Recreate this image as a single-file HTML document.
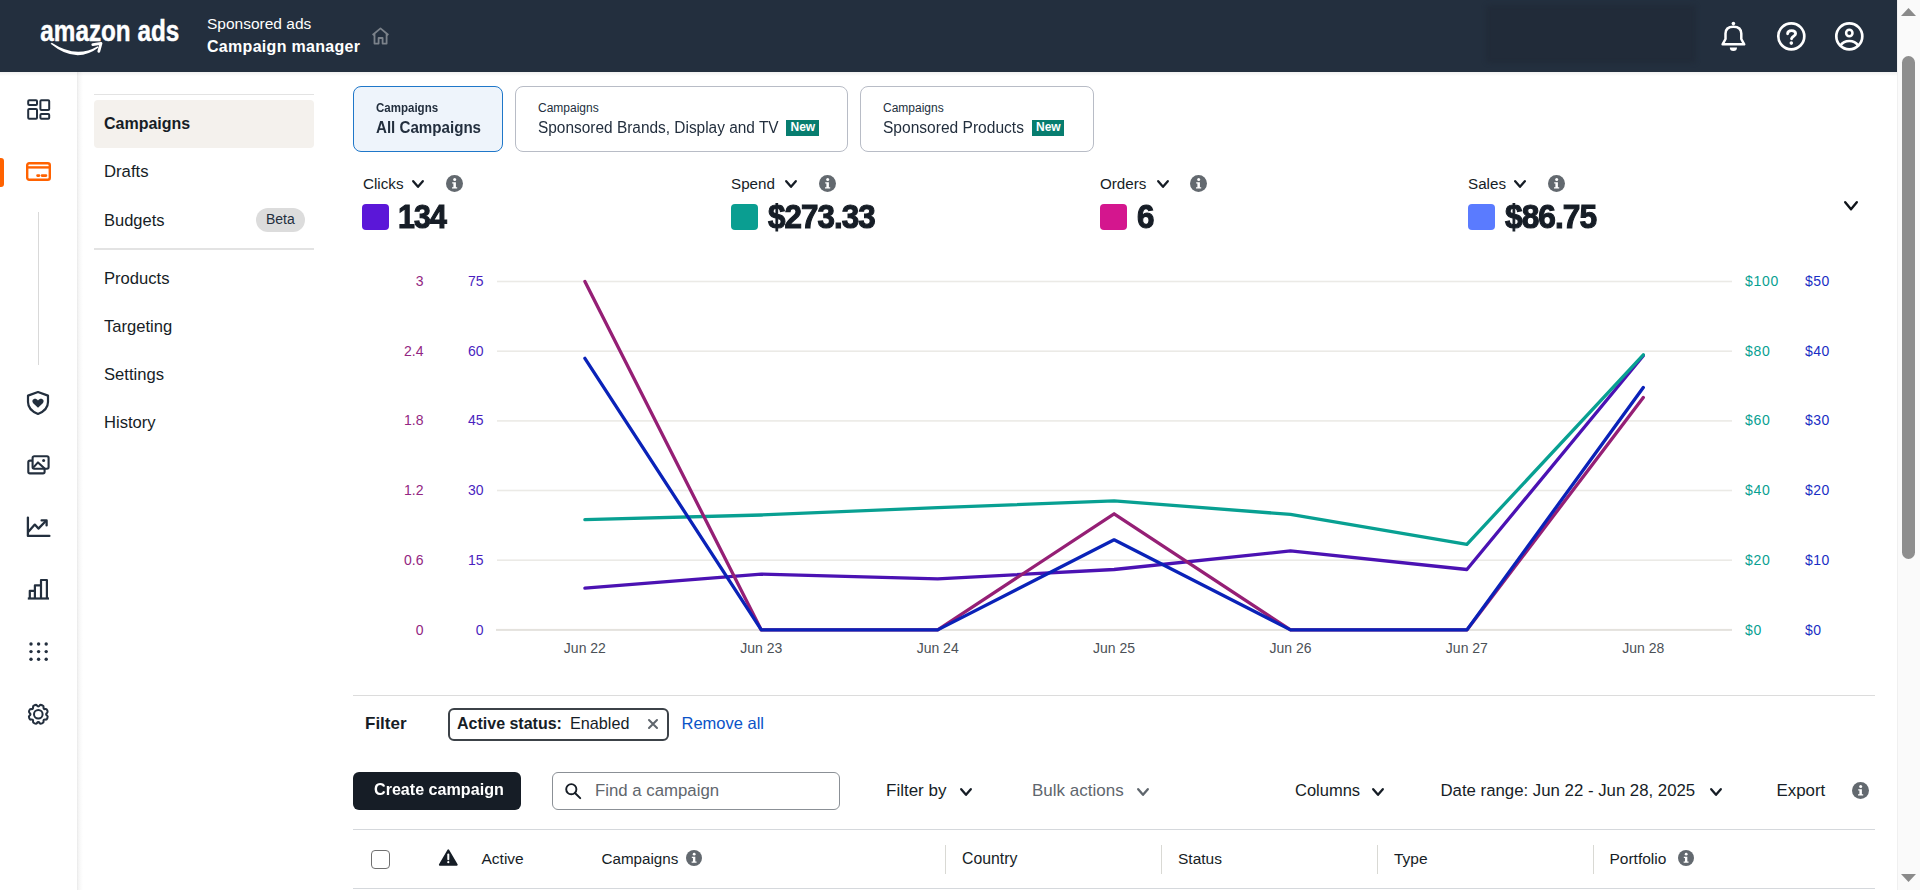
<!DOCTYPE html>
<html><head><meta charset="utf-8">
<style>
*{box-sizing:border-box;margin:0;padding:0}
html,body{width:1920px;height:890px;overflow:hidden;background:#fff;font-family:"Liberation Sans",sans-serif;color:#161d26}
.a{position:absolute;white-space:nowrap;line-height:1}
svg{position:absolute;overflow:visible}
#hdr{position:absolute;left:0;top:0;width:1897px;height:72px;background:#232f3e}
#rail{position:absolute;left:0;top:72px;width:77px;height:818px;background:#fff}
#railsh{position:absolute;left:77px;top:72px;width:6px;height:818px;background:linear-gradient(90deg,#e9e9e9,#f6f6f6 30%,rgba(255,255,255,0))}
#sb{position:absolute;left:1897px;top:0;width:23px;height:890px;background:#fafafa;border-left:1px solid #f0f0f0}
</style></head><body>

<!-- HEADER -->
<div id="hdr"></div>
<div style="position:absolute;left:1486px;top:5px;width:210px;height:58px;background:#212b39;border-radius:4px;filter:blur(2px)"></div>


<!-- logo -->
<svg style="left:0;top:0" width="200" height="72">
  <text x="40.3" y="40.5" font-family="Liberation Sans" font-weight="700" font-size="29" fill="#fff" stroke="#fff" stroke-width="0.45" textLength="139" lengthAdjust="spacingAndGlyphs">amazon ads</text>
  <path d="M50.6 43.8 Q76 64.6 98.6 47.6 L97.8 46.2 Q76 58.8 51.8 42.8 Z" fill="#fff"/>
  <path d="M92.8 44.6 L101 43.4 L98.8 51.4" stroke="#fff" stroke-width="2.8" fill="none" stroke-linecap="round" stroke-linejoin="round"/>
</svg>
<div class="a" style="left:207px;top:15.8px;font-size:15.5px;color:#fff">Sponsored ads</div>
<div class="a" style="left:207px;top:39px;font-size:16px;font-weight:700;color:#fff;letter-spacing:.3px">Campaign manager</div>
<!-- home icon -->
<svg style="left:370px;top:24.5px" width="22" height="22" viewBox="0 0 22 22">
  <path d="M2.6 10 L10.5 3.4 L18.4 10 M4.5 8.6 V18.6 H8.6 V13 H12.6 V18.6 H16.6 V8.6" stroke="#7b828a" stroke-width="1.8" fill="none" stroke-linejoin="round"/>
</svg>

<!-- header right icons -->
<svg style="left:1718px;top:20px" width="30" height="34" viewBox="0 0 30 34">
  <path d="M4.6 24.3 L7.5 19 V13.6 C7.5 8.6 11 6.7 15.4 6.7 C19.8 6.7 23.3 8.6 23.3 13.6 V19 L26.2 24.3 Z" stroke="#fff" stroke-width="2.5" fill="none" stroke-linejoin="round"/>
  <circle cx="15.4" cy="3.6" r="1.8" fill="#fff"/>
  <path d="M11.8 27.4 H19 A3.6 3.5 0 0 1 11.8 27.4 Z" fill="#fff"/>
</svg>
<svg style="left:1776px;top:21px" width="31" height="31" viewBox="0 0 31 31">
  <circle cx="15.3" cy="15.3" r="13" stroke="#fff" stroke-width="2.7" fill="none"/>
  <path d="M11.6 12.8 C11.6 10.6 13.4 9.6 15.6 9.6 C18.2 9.6 19.6 10.9 19.6 12.7 C19.6 14.9 16.4 15.3 15.5 17.8" stroke="#fff" stroke-width="2.8" fill="none" stroke-linecap="round"/>
  <circle cx="15.3" cy="22.1" r="1.8" fill="#fff"/>
</svg>
<svg style="left:1834px;top:21px" width="31" height="31" viewBox="0 0 31 31">
  <circle cx="15.3" cy="15.3" r="13" stroke="#fff" stroke-width="2.7" fill="none"/>
  <circle cx="15.3" cy="12" r="3.2" stroke="#fff" stroke-width="2.5" fill="none"/>
  <path d="M6.5 24.5 C8.5 21.5 11.8 20 15.3 20 C18.8 20 22.1 21.5 24.1 24.5" stroke="#fff" stroke-width="2.7" fill="none"/>
</svg>

<!-- LEFT RAIL -->
<div id="rail"></div><div id="railsh"></div>
<div style="position:absolute;left:0;top:158px;width:4px;height:29px;background:#ff6200;border-radius:0 3px 3px 0"></div>


<!-- rail icons -->
<svg style="left:26px;top:98px" width="26" height="24" viewBox="0 0 26 24">
  <g stroke="#232f3e" stroke-width="2" fill="none" stroke-linejoin="round">
  <rect x="2.2" y="2.2" width="8.8" height="4.8" rx="1"/>
  <rect x="2.2" y="11" width="8.8" height="9.8" rx="1"/>
  <rect x="14.4" y="2.2" width="8.8" height="9.8" rx="1"/>
  <rect x="14.4" y="16" width="8.8" height="4.8" rx="1"/>
  </g>
</svg>
<svg style="left:25px;top:161px" width="28" height="22" viewBox="0 0 28 22">
  <g stroke="#ff6200" stroke-width="2.4" fill="none">
  <rect x="2.2" y="2.2" width="22.6" height="16.6" rx="2"/>
  <path d="M2.2 6.4 H24.8"/>
  <path d="M12.5 14.6 H14 M17 14.6 H21" stroke-linecap="round" stroke-width="2.6"/>
  </g>
</svg>
<div style="position:absolute;left:37.5px;top:212px;width:1.5px;height:153px;background:#d9d9d9"></div>
<svg style="left:24.4px;top:389px" width="28" height="28" viewBox="0 0 28 28">
  <path d="M14 3 L24 6.6 V13 C24 19 19.5 22.8 14 25 C8.5 22.8 4 19 4 13 V6.6 Z" stroke="#232f3e" stroke-width="2.2" fill="none" stroke-linejoin="round"/>
  <path d="M14 18.8 L9.2 14.2 C7.9 12.9 8.1 10.7 9.9 10 C11.4 9.5 13 10.2 14 11.5 C15 10.2 16.6 9.5 18.1 10 C19.9 10.7 20.1 12.9 18.8 14.2 Z" fill="#232f3e"/>
</svg>
<svg style="left:25px;top:452px" width="28" height="26" viewBox="0 0 28 26">
  <g stroke="#232f3e" stroke-width="2.1" fill="none" stroke-linejoin="round">
  <rect x="7.6" y="4.3" width="16" height="12.4" rx="1.6"/>
  <path d="M7.6 8.6 H4.9 Q3.3 8.6 3.3 10.2 V19.8 Q3.3 21.4 4.9 21.4 H18 Q19.6 21.4 19.6 19.8 V16.7"/>
  <path d="M8.2 15.6 L13 10.4 L19.6 16.6"/>
  </g>
  <circle cx="18.6" cy="8.4" r="1.5" fill="#232f3e"/>
</svg>
<svg style="left:25px;top:515px" width="28" height="24" viewBox="0 0 28 24">
  <g stroke="#232f3e" stroke-width="2.3" fill="none" stroke-linejoin="round" stroke-linecap="round">
  <path d="M2.9 2.6 V20.9 H24.4"/>
  <path d="M3.6 16.4 L9.8 9.6 L13.4 13.6 L20.6 6.2"/>
  <path d="M16.6 5.4 H21.6 V10.4"/>
  </g>
</svg>
<svg style="left:25px;top:577px" width="28" height="25" viewBox="0 0 28 25">
  <g stroke="#232f3e" stroke-width="2.2" fill="none" stroke-linejoin="round">
  <path d="M2.8 21.5 H24"/>
  <path d="M4.8 21.5 V13.8 H9.9 V8.3 H16 V3 H21.9 V21.5 M9.9 13.8 V21.5 M16 8.3 V21.5"/>
  </g>
</svg>
<svg style="left:25px;top:640px" width="28" height="24" viewBox="0 0 28 24">
  <g fill="#232f3e">
  <circle cx="6" cy="4" r="1.7"/><circle cx="13.6" cy="4" r="1.7"/><circle cx="21.2" cy="4" r="1.7"/>
  <circle cx="6" cy="11.6" r="1.7"/><circle cx="13.6" cy="11.6" r="1.7"/><circle cx="21.2" cy="11.6" r="1.7"/>
  <circle cx="6" cy="19.2" r="1.7"/><circle cx="13.6" cy="19.2" r="1.7"/><circle cx="21.2" cy="19.2" r="1.7"/>
  </g>
</svg>
<svg style="left:25px;top:701px" width="28" height="28" viewBox="0 0 28 28">
  <path id="gear" stroke="#232f3e" stroke-width="2.1" fill="none" stroke-linejoin="round" d="M21.16 13.30 Q21.16 12.54 22.13 11.92 Q23.10 11.31 22.37 9.54 Q21.64 7.78 20.52 8.03 Q19.40 8.27 18.86 7.74 Q18.33 7.20 18.57 6.08 Q18.82 4.96 17.06 4.23 Q15.29 3.50 14.68 4.47 Q14.06 5.44 13.30 5.44 Q12.54 5.44 11.92 4.47 Q11.31 3.50 9.54 4.23 Q7.78 4.96 8.03 6.08 Q8.27 7.20 7.74 7.74 Q7.20 8.27 6.08 8.03 Q4.96 7.78 4.23 9.54 Q3.50 11.31 4.47 11.92 Q5.44 12.54 5.44 13.30 Q5.44 14.06 4.47 14.68 Q3.50 15.29 4.23 17.06 Q4.96 18.82 6.08 18.57 Q7.20 18.33 7.74 18.86 Q8.27 19.40 8.03 20.52 Q7.78 21.64 9.54 22.37 Q11.31 23.10 11.92 22.13 Q12.54 21.16 13.30 21.16 Q14.06 21.16 14.68 22.13 Q15.29 23.10 17.06 22.37 Q18.82 21.64 18.57 20.52 Q18.33 19.40 18.86 18.86 Q19.40 18.33 20.52 18.57 Q21.64 18.82 22.37 17.06 Q23.10 15.29 22.13 14.68 Q21.16 14.06 21.16 13.30 Z"/>
  <circle cx="13.3" cy="13.3" r="4.3" stroke="#232f3e" stroke-width="2" fill="none"/>
</svg>

<div style="position:absolute;left:0;top:72px;z-index:5;width:1897px;height:4px;background:linear-gradient(rgba(0,0,0,.06),rgba(0,0,0,0))"></div>
<!-- SECONDARY NAV -->
<div style="position:absolute;left:94px;top:94px;width:220px;height:1px;background:#e3e3e3"></div>
<div style="position:absolute;left:94px;top:100px;width:220px;height:48px;background:#f4f1ed;border-radius:4px"></div>
<div class="a" style="left:104px;top:115.5px;font-size:16px;font-weight:700">Campaigns</div>
<div class="a" style="left:104px;top:163.7px;font-size:16.7px">Drafts</div>
<div class="a" style="left:104px;top:211.5px;font-size:16.5px">Budgets</div>
<div style="position:absolute;left:256px;top:208px;width:49px;height:24px;background:#dcdcdc;border-radius:12px"></div>
<div class="a" style="left:266px;top:212px;font-size:14px;color:#232f3e">Beta</div>
<div style="position:absolute;left:94px;top:248px;width:220px;height:2px;background:#e3e3e3"></div>
<div class="a" style="left:104px;top:270.7px;font-size:16.6px">Products</div>
<div class="a" style="left:104px;top:318.8px;font-size:16.6px">Targeting</div>
<div class="a" style="left:104px;top:366.8px;font-size:16.6px">Settings</div>
<div class="a" style="left:104px;top:414.9px;font-size:16.6px">History</div>


<!-- TABS -->
<div style="position:absolute;left:353px;top:86px;width:150px;height:66px;background:#eef4fb;border:1.5px solid #1f77c9;border-radius:8px"></div>
<div class="a" style="left:376px;top:101.8px;font-size:12px;font-weight:700;color:#232f3e;transform:scaleX(.96);transform-origin:0 0">Campaigns</div>
<div class="a" style="left:376px;top:119.7px;font-size:16px;font-weight:700;color:#232f3e;transform:scaleX(.945);transform-origin:0 0">All Campaigns</div>

<div style="position:absolute;left:515px;top:86px;width:333px;height:66px;background:#fff;border:1px solid #b8bcc6;border-radius:8px"></div>
<div class="a" style="left:538px;top:102.2px;font-size:12px;color:#232f3e">Campaigns</div>
<div class="a" style="left:538px;top:119.9px;font-size:16px;color:#232f3e;transform:scaleX(.964);transform-origin:0 0">Sponsored Brands, Display and TV</div>
<div style="position:absolute;left:786px;top:120px;width:33px;height:16px;background:#077d6f"></div>
<div class="a" style="left:790.5px;top:121px;font-size:12px;font-weight:700;color:#fff">New</div>

<div style="position:absolute;left:860px;top:86px;width:234px;height:66px;background:#fff;border:1px solid #b8bcc6;border-radius:8px"></div>
<div class="a" style="left:883px;top:102.2px;font-size:12px;color:#232f3e">Campaigns</div>
<div class="a" style="left:883px;top:119.9px;font-size:16px;color:#232f3e;transform:scaleX(.972);transform-origin:0 0">Sponsored Products</div>
<div style="position:absolute;left:1032px;top:120px;width:32px;height:16px;background:#077d6f"></div>
<div class="a" style="left:1036px;top:121px;font-size:12px;font-weight:700;color:#fff">New</div>

<!-- METRICS -->
<div class="a" style="left:363px;top:175.6px;font-size:15.2px;color:#161d26">Clicks</div>
<svg style="left:412px;top:180px" width="12" height="8" viewBox="0 0 12 8"><path d="M1.2 1.2 L6.0 6.8 L10.8 1.2" stroke="#161d26" stroke-width="2.3" fill="none" stroke-linecap="round" stroke-linejoin="round"/></svg>
<svg style="left:445.5px;top:175.0px" width="17.0" height="17.0" viewBox="0 0 17 17"><circle cx="8.5" cy="8.5" r="8.5" fill="#63696f"/><circle cx="8.7" cy="4.4" r="1.5" fill="#fff"/><path d="M6.2 7.2 H9.9 V12.2 H11.2 V13.6 H6 V12.2 H7.4 V8.6 H6.2 Z" fill="#fff"/></svg>
<div style="position:absolute;left:362px;top:204px;width:27px;height:26px;background:#5b17d8;border-radius:4px"></div>
<div class="a" id="v_Clicks" style="left:398px;top:199.6px;font-size:33px;font-weight:700;color:#161d26;-webkit-text-stroke:1.1px #161d26;letter-spacing:-1px;transform:scaleX(0.92);transform-origin:0 0">134</div>
<div class="a" style="left:731px;top:175.6px;font-size:15.2px;color:#161d26">Spend</div>
<svg style="left:785px;top:180px" width="12" height="8" viewBox="0 0 12 8"><path d="M1.2 1.2 L6.0 6.8 L10.8 1.2" stroke="#161d26" stroke-width="2.3" fill="none" stroke-linecap="round" stroke-linejoin="round"/></svg>
<svg style="left:818.5px;top:175.0px" width="17.0" height="17.0" viewBox="0 0 17 17"><circle cx="8.5" cy="8.5" r="8.5" fill="#63696f"/><circle cx="8.7" cy="4.4" r="1.5" fill="#fff"/><path d="M6.2 7.2 H9.9 V12.2 H11.2 V13.6 H6 V12.2 H7.4 V8.6 H6.2 Z" fill="#fff"/></svg>
<div style="position:absolute;left:731px;top:204px;width:27px;height:26px;background:#0a9e91;border-radius:4px"></div>
<div class="a" id="v_Spend" style="left:768px;top:199.6px;font-size:33px;font-weight:700;color:#161d26;-webkit-text-stroke:1.1px #161d26;letter-spacing:-1px;transform:scaleX(0.95);transform-origin:0 0">$273.33</div>
<div class="a" style="left:1100px;top:175.6px;font-size:15.2px;color:#161d26">Orders</div>
<svg style="left:1157px;top:180px" width="12" height="8" viewBox="0 0 12 8"><path d="M1.2 1.2 L6.0 6.8 L10.8 1.2" stroke="#161d26" stroke-width="2.3" fill="none" stroke-linecap="round" stroke-linejoin="round"/></svg>
<svg style="left:1190.0px;top:175.0px" width="17.0" height="17.0" viewBox="0 0 17 17"><circle cx="8.5" cy="8.5" r="8.5" fill="#63696f"/><circle cx="8.7" cy="4.4" r="1.5" fill="#fff"/><path d="M6.2 7.2 H9.9 V12.2 H11.2 V13.6 H6 V12.2 H7.4 V8.6 H6.2 Z" fill="#fff"/></svg>
<div style="position:absolute;left:1100px;top:204px;width:27px;height:26px;background:#d4168e;border-radius:4px"></div>
<div class="a" id="v_Orders" style="left:1136.5px;top:199.6px;font-size:33px;font-weight:700;color:#161d26;-webkit-text-stroke:1.1px #161d26;letter-spacing:-1px;transform:scaleX(0.95);transform-origin:0 0">6</div>
<div class="a" style="left:1468px;top:175.6px;font-size:15.2px;color:#161d26">Sales</div>
<svg style="left:1514px;top:180px" width="12" height="8" viewBox="0 0 12 8"><path d="M1.2 1.2 L6.0 6.8 L10.8 1.2" stroke="#161d26" stroke-width="2.3" fill="none" stroke-linecap="round" stroke-linejoin="round"/></svg>
<svg style="left:1548.0px;top:175.0px" width="17.0" height="17.0" viewBox="0 0 17 17"><circle cx="8.5" cy="8.5" r="8.5" fill="#63696f"/><circle cx="8.7" cy="4.4" r="1.5" fill="#fff"/><path d="M6.2 7.2 H9.9 V12.2 H11.2 V13.6 H6 V12.2 H7.4 V8.6 H6.2 Z" fill="#fff"/></svg>
<div style="position:absolute;left:1468px;top:204px;width:27px;height:26px;background:#5a7bff;border-radius:4px"></div>
<div class="a" id="v_Sales" style="left:1505px;top:199.6px;font-size:33px;font-weight:700;color:#161d26;-webkit-text-stroke:1.1px #161d26;letter-spacing:-1px;transform:scaleX(0.96);transform-origin:0 0">$86.75</div>
<svg style="left:1844.3px;top:200.6px" width="14" height="9.5" viewBox="0 0 14 9.5"><path d="M1.2 1.2 L7 8.3 L12.8 1.2" stroke="#0f141a" stroke-width="2.4" fill="none" stroke-linecap="round" stroke-linejoin="round"/></svg>

<!-- CHART -->
<svg style="left:0;top:0" width="1897" height="890">
<rect x="496" y="628.9" width="1236" height="2" fill="#e4e2dd"/>
<rect x="497" y="559.4" width="1235" height="1.6" fill="#ebeae6"/>
<rect x="497" y="489.7" width="1235" height="1.6" fill="#ebeae6"/>
<rect x="497" y="420.1" width="1235" height="1.6" fill="#ebeae6"/>
<rect x="497" y="350.4" width="1235" height="1.6" fill="#ebeae6"/>
<rect x="497" y="280.7" width="1235" height="1.6" fill="#ebeae6"/>
<polyline points="584.9,588.1 761.3,574.2 937.7,578.8 1114.1,569.5 1290.5,550.9 1466.9,569.5 1643.3,355.8" stroke="#4b12b3" fill="none" stroke-width="3.3" stroke-linecap="round" stroke-linejoin="round"/>
<polyline points="584.9,519.6 761.3,515.0 937.7,507.7 1114.1,500.8 1290.5,514.4 1466.9,544.3 1643.3,354.8" stroke="#08a092" fill="none" stroke-width="3.3" stroke-linecap="round" stroke-linejoin="round"/>
<polyline points="584.9,281.5 761.3,629.9 937.7,629.9 1114.1,513.8 1290.5,629.9 1466.9,629.9 1643.3,397.6" stroke="#951f75" fill="none" stroke-width="3.3" stroke-linecap="round" stroke-linejoin="round"/>
<polyline points="584.9,358.3 761.3,629.9 937.7,629.9 1114.1,539.8 1290.5,629.9 1466.9,629.9 1643.3,387.5" stroke="#0a22b8" fill="none" stroke-width="3.3" stroke-linecap="round" stroke-linejoin="round"/>
</svg>
<div class="a" style="right:1496.5px;top:622.5px;font-size:14px;color:#932682">0</div>
<div class="a" style="right:1436.5px;top:622.5px;font-size:14px;color:#4a1fc0">0</div>
<div class="a" style="left:1745px;top:622.5px;font-size:14px;color:#08a092;letter-spacing:.7px">$0</div>
<div class="a" style="left:1805px;top:622.5px;font-size:14px;color:#1a2ec4;letter-spacing:.5px">$0</div>
<div class="a" style="right:1496.5px;top:552.8px;font-size:14px;color:#932682">0.6</div>
<div class="a" style="right:1436.5px;top:552.8px;font-size:14px;color:#4a1fc0">15</div>
<div class="a" style="left:1745px;top:552.8px;font-size:14px;color:#08a092;letter-spacing:.7px">$20</div>
<div class="a" style="left:1805px;top:552.8px;font-size:14px;color:#1a2ec4;letter-spacing:.5px">$10</div>
<div class="a" style="right:1496.5px;top:483.1px;font-size:14px;color:#932682">1.2</div>
<div class="a" style="right:1436.5px;top:483.1px;font-size:14px;color:#4a1fc0">30</div>
<div class="a" style="left:1745px;top:483.1px;font-size:14px;color:#08a092;letter-spacing:.7px">$40</div>
<div class="a" style="left:1805px;top:483.1px;font-size:14px;color:#1a2ec4;letter-spacing:.5px">$20</div>
<div class="a" style="right:1496.5px;top:413.4px;font-size:14px;color:#932682">1.8</div>
<div class="a" style="right:1436.5px;top:413.4px;font-size:14px;color:#4a1fc0">45</div>
<div class="a" style="left:1745px;top:413.4px;font-size:14px;color:#08a092;letter-spacing:.7px">$60</div>
<div class="a" style="left:1805px;top:413.4px;font-size:14px;color:#1a2ec4;letter-spacing:.5px">$30</div>
<div class="a" style="right:1496.5px;top:343.8px;font-size:14px;color:#932682">2.4</div>
<div class="a" style="right:1436.5px;top:343.8px;font-size:14px;color:#4a1fc0">60</div>
<div class="a" style="left:1745px;top:343.8px;font-size:14px;color:#08a092;letter-spacing:.7px">$80</div>
<div class="a" style="left:1805px;top:343.8px;font-size:14px;color:#1a2ec4;letter-spacing:.5px">$40</div>
<div class="a" style="right:1496.5px;top:274.1px;font-size:14px;color:#932682">3</div>
<div class="a" style="right:1436.5px;top:274.1px;font-size:14px;color:#4a1fc0">75</div>
<div class="a" style="left:1745px;top:274.1px;font-size:14px;color:#08a092;letter-spacing:.7px">$100</div>
<div class="a" style="left:1805px;top:274.1px;font-size:14px;color:#1a2ec4;letter-spacing:.5px">$50</div>
<div class="a" style="left:559.9px;width:50px;text-align:center;top:641.0px;font-size:14px;color:#4b5056">Jun 22</div>
<div class="a" style="left:736.3px;width:50px;text-align:center;top:641.0px;font-size:14px;color:#4b5056">Jun 23</div>
<div class="a" style="left:912.7px;width:50px;text-align:center;top:641.0px;font-size:14px;color:#4b5056">Jun 24</div>
<div class="a" style="left:1089.1px;width:50px;text-align:center;top:641.0px;font-size:14px;color:#4b5056">Jun 25</div>
<div class="a" style="left:1265.5px;width:50px;text-align:center;top:641.0px;font-size:14px;color:#4b5056">Jun 26</div>
<div class="a" style="left:1441.9px;width:50px;text-align:center;top:641.0px;font-size:14px;color:#4b5056">Jun 27</div>
<div class="a" style="left:1618.3px;width:50px;text-align:center;top:641.0px;font-size:14px;color:#4b5056">Jun 28</div>


<!-- FILTER ROW -->
<div style="position:absolute;left:353px;top:695px;width:1522px;height:1px;background:#dcdcdc"></div>
<div class="a" style="left:365px;top:715.3px;font-size:17px;font-weight:700;color:#161d26">Filter</div>
<div style="position:absolute;left:448px;top:708px;width:221px;height:33px;border:2px solid #3c4248;border-radius:6px"></div>
<div class="a" style="left:457px;top:716.3px;font-size:16px;font-weight:700;color:#161d26">Active status:</div>
<div class="a" style="left:570px;top:715.4px;font-size:16.2px;color:#161d26">Enabled</div>
<svg style="left:646px;top:717px" width="14" height="14" viewBox="0 0 14 14"><path d="M3 3 L11 11 M11 3 L3 11" stroke="#5f666d" stroke-width="2" stroke-linecap="round"/></svg>
<div class="a" style="left:681.5px;top:715.4px;font-size:16.5px;color:#0a53c8">Remove all</div>

<!-- TOOLBAR -->
<div style="position:absolute;left:353px;top:772px;width:168px;height:38px;background:#161d26;border-radius:6px"></div>
<div class="a" style="left:373.5px;top:782.4px;font-size:16.8px;font-weight:700;color:#fff;transform:scaleX(.96);transform-origin:0 0">Create campaign</div>
<div style="position:absolute;left:552px;top:772px;width:288px;height:38px;border:1px solid #8b9096;border-radius:6px;background:#fff"></div>
<svg style="left:563px;top:780px" width="22" height="22" viewBox="0 0 22 22"><circle cx="8.3" cy="9.2" r="5.1" stroke="#161d26" stroke-width="1.9" fill="none"/><path d="M12 13 L17.2 18.1" stroke="#161d26" stroke-width="2" stroke-linecap="round"/></svg>
<div class="a" style="left:595px;top:782.6px;font-size:16.8px;color:#5f666d">Find a campaign</div>
<div class="a" style="left:886px;top:782.3px;font-size:17px;color:#161d26">Filter by</div>
<svg style="left:960px;top:787.5px" width="12" height="8" viewBox="0 0 12 8"><path d="M1.2 1.2 L6.0 6.8 L10.8 1.2" stroke="#161d26" stroke-width="2.3" fill="none" stroke-linecap="round" stroke-linejoin="round"/></svg>
<div class="a" style="left:1032px;top:782.3px;font-size:17px;color:#5f666d">Bulk actions</div>
<svg style="left:1137px;top:787.5px" width="12" height="8" viewBox="0 0 12 8"><path d="M1.2 1.2 L6.0 6.8 L10.8 1.2" stroke="#5f666d" stroke-width="2.3" fill="none" stroke-linecap="round" stroke-linejoin="round"/></svg>
<div class="a" style="left:1295px;top:782.3px;font-size:16.5px;color:#161d26">Columns</div>
<svg style="left:1372px;top:787.5px" width="12" height="8" viewBox="0 0 12 8"><path d="M1.2 1.2 L6.0 6.8 L10.8 1.2" stroke="#161d26" stroke-width="2.3" fill="none" stroke-linecap="round" stroke-linejoin="round"/></svg>
<div class="a" style="left:1440.5px;top:782.6px;font-size:16.8px;color:#161d26">Date range: Jun 22 - Jun 28, 2025</div>
<svg style="left:1709.5px;top:787.5px" width="12" height="8" viewBox="0 0 12 8"><path d="M1.2 1.2 L6.0 6.8 L10.8 1.2" stroke="#161d26" stroke-width="2.3" fill="none" stroke-linecap="round" stroke-linejoin="round"/></svg>
<div class="a" style="left:1776.5px;top:782.6px;font-size:16.9px;color:#161d26">Export</div>
<svg style="left:1852.0px;top:782.0px" width="17.0" height="17.0" viewBox="0 0 17 17"><circle cx="8.5" cy="8.5" r="8.5" fill="#63696f"/><circle cx="8.7" cy="4.4" r="1.5" fill="#fff"/><path d="M6.2 7.2 H9.9 V12.2 H11.2 V13.6 H6 V12.2 H7.4 V8.6 H6.2 Z" fill="#fff"/></svg>

<!-- TABLE HEADER -->
<div style="position:absolute;left:353px;top:828.5px;width:1522px;height:1.5px;background:#d5d8dc"></div>
<div style="position:absolute;left:371px;top:850px;width:19px;height:19px;border:1px solid #707070;border-radius:4px;background:#fff"></div>
<svg style="left:438px;top:848px" width="21" height="19" viewBox="0 0 21 19"><path d="M10.3 2.2 L18.8 16.8 H1.8 Z" fill="#161d26" stroke="#161d26" stroke-width="1.8" stroke-linejoin="round"/><path d="M10.3 6.4 V11.2" stroke="#fff" stroke-width="2" stroke-linecap="round"/><circle cx="10.3" cy="14.2" r="1.1" fill="#fff"/></svg>
<div class="a" style="left:481.5px;top:850.7px;font-size:15.5px;color:#161d26">Active</div>
<div class="a" style="left:601.5px;top:850.7px;font-size:15.2px;color:#161d26">Campaigns</div>
<svg style="left:685.7px;top:849.7px" width="16" height="16" viewBox="0 0 17 17"><circle cx="8.5" cy="8.5" r="8.5" fill="#63696f"/><circle cx="8.7" cy="4.4" r="1.5" fill="#fff"/><path d="M6.2 7.2 H9.9 V12.2 H11.2 V13.6 H6 V12.2 H7.4 V8.6 H6.2 Z" fill="#fff"/></svg>
<div style="position:absolute;left:944.5px;top:845px;width:1.5px;height:29px;background:#d9d9d4"></div>
<div class="a" style="left:962px;top:850.7px;font-size:15.8px;color:#161d26">Country</div>
<div style="position:absolute;left:1160.5px;top:845px;width:1.5px;height:29px;background:#d9d9d4"></div>
<div class="a" style="left:1178px;top:850.7px;font-size:15.5px;color:#161d26">Status</div>
<div style="position:absolute;left:1376.5px;top:845px;width:1.5px;height:29px;background:#d9d9d4"></div>
<div class="a" style="left:1394px;top:850.7px;font-size:15.5px;color:#161d26">Type</div>
<div style="position:absolute;left:1592.5px;top:845px;width:1.5px;height:29px;background:#d9d9d4"></div>
<div class="a" style="left:1609.5px;top:850.7px;font-size:15.5px;color:#161d26">Portfolio</div>
<svg style="left:1678px;top:849.7px" width="16" height="16" viewBox="0 0 17 17"><circle cx="8.5" cy="8.5" r="8.5" fill="#63696f"/><circle cx="8.7" cy="4.4" r="1.5" fill="#fff"/><path d="M6.2 7.2 H9.9 V12.2 H11.2 V13.6 H6 V12.2 H7.4 V8.6 H6.2 Z" fill="#fff"/></svg>
<div style="position:absolute;left:353px;top:887.5px;width:1522px;height:1.5px;background:#d5d8dc"></div>

<!-- SCROLLBAR -->
<div id="sb"></div>
<svg style="left:1897px;top:0" width="23" height="890" viewBox="0 0 23 890">
<path d="M4 16 L11.5 8 L19 16 Z" fill="#8a8a8a"/>
<rect x="5" y="56" width="13" height="503" rx="6.5" fill="#8e8e8e"/>
<path d="M4 874 L19 874 L11.5 882 Z" fill="#8a8a8a"/>
</svg>

</body></html>
